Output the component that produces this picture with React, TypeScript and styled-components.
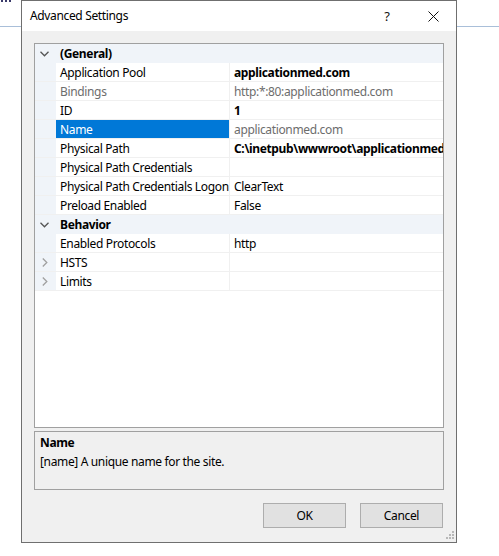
import styled, { createGlobalStyle } from "styled-components";

const GlobalStyle = createGlobalStyle`
  html, body {
    margin: 0;
    padding: 0;
    background: #ffffff;
  }
  body {
    font-family: "Noto Sans", "Open Sans", sans-serif;
    font-size: 12px;
    letter-spacing: -0.35px;
    color: #000;
  }
`;

const Page = styled.div`
  width: 499px;
  height: 556px;
  display: flex;
  align-items: flex-start;
  background-color: #ffffff;
  background-image: linear-gradient(#a9bfd9, #a9bfd9);
  background-size: 100% 1px;
  background-position: 0 26px;
  background-repeat: no-repeat;
  overflow: hidden;
`;

const LeftStrip = styled.div`
  width: 21px;
  flex: none;
  height: 10px;
`;

const Dots = styled.div`
  display: flex;
  gap: 2px;
  padding: 0 0 0 1px;
  span {
    width: 2px;
    height: 2px;
    background: #3a3a6a;
  }
`;

const Dialog = styled.div`
  width: 434px;
  height: 541px;
  flex: none;
  border: 1px solid #6f6f6f;
  background: #f0f0f0;
  display: flex;
  flex-direction: column;
`;

const TitleBar = styled.div`
  height: 30px;
  background: #ffffff;
  display: flex;
  align-items: center;
  padding-left: 8px;
`;

const Title = styled.div`
  flex: 1;
  font-size: 12px;
  color: #000;
  padding-bottom: 1px;
`;

const TitleButton = styled.div<{ $w: number }>`
  width: ${(p) => p.$w}px;
  height: 30px;
  display: flex;
  align-items: center;
  justify-content: center;
  font-size: 13px;
  color: #111;
`;

const Body = styled.div`
  flex: 1;
  display: flex;
  flex-direction: column;
  padding: 12px 12px 0 12px;
`;

const Grid = styled.div`
  height: 383px;
  border: 1px solid #a0a0a0;
  background: #ffffff;
  display: flex;
  flex-direction: column;
  overflow: hidden;
`;

const Row = styled.div<{ $category?: boolean }>`
  height: 18px;
  flex: none;
  display: flex;
  border-bottom: 1px solid ${(p) => (p.$category ? "#f0f4f9" : "#f0f0f0")};
  background: ${(p) => (p.$category ? "#f0f4f9" : "#ffffff")};
`;

const Gutter = styled.div`
  width: 21px;
  flex: none;
  display: flex;
  align-items: center;
  justify-content: center;
  background: #f0f4f9;
  padding: 1px 2px 0 0;
  box-sizing: border-box;
`;

const CategoryText = styled.div`
  font-weight: 700;
  padding: 1px 0 0 4px;
  line-height: 18px;
  white-space: nowrap;
`;

const LabelCell = styled.div<{ $selected?: boolean; $dim?: boolean }>`
  width: 174px;
  flex: none;
  border-right: 1px solid #f0f0f0;
  padding: 1px 0 0 4px;
  box-sizing: border-box;
  line-height: 18px;
  white-space: nowrap;
  overflow: hidden;
  background: ${(p) => (p.$selected ? "#0078d7" : "transparent")};
  color: ${(p) => (p.$selected ? "#ffffff" : p.$dim ? "#6d6d6d" : "#000")};
`;

const ValueCell = styled.div<{ $bold?: boolean; $dim?: boolean }>`
  flex: 1;
  min-width: 0;
  padding: 1px 0 0 4px;
  line-height: 18px;
  white-space: nowrap;
  overflow: hidden;
  font-weight: ${(p) => (p.$bold ? 700 : 400)};
  color: ${(p) => (p.$dim ? "#6d6d6d" : "#000")};
`;

const Description = styled.div`
  margin-top: 3px;
  height: 56px;
  border: 1px solid #a0a0a0;
  background: #f0f0f0;
  padding: 1px 0 0 5px;
  line-height: 19px;
`;

const DescTitle = styled.div`
  font-weight: 700;
`;

const Footer = styled.div`
  display: flex;
  justify-content: flex-end;
  gap: 14px;
  padding: 13px 13px 0 0;
  position: relative;
  flex: 1;
`;

const Button = styled.button`
  width: 83px;
  height: 25px;
  border: 1px solid #adadad;
  background: #e1e1e1;
  font-family: inherit;
  font-size: 12px;
  letter-spacing: inherit;
  color: #000;
  padding: 0;
`;

const Grip = styled.svg`
  position: absolute;
  right: 2px;
  bottom: 3px;
`;

const Chevron = ({ open, color }: { open: boolean; color: string }) =>
  open ? (
    <svg width="9" height="6" viewBox="0 0 9 6">
      <path d="M0.5 0.8 L4.5 4.8 L8.5 0.8" fill="none" stroke={color} strokeWidth="1.3" />
    </svg>
  ) : (
    <svg width="6" height="9" viewBox="0 0 6 9">
      <path d="M0.8 0.5 L4.8 4.5 L0.8 8.5" fill="none" stroke={color} strokeWidth="1.3" />
    </svg>
  );

type Item =
  | { kind: "cat"; name: string }
  | {
      kind: "prop";
      label: string;
      value?: string;
      bold?: boolean;
      dim?: boolean;
      dimLabel?: boolean;
      selected?: boolean;
      collapsed?: boolean;
    };

const items: Item[] = [
  { kind: "cat", name: "(General)" },
  { kind: "prop", label: "Application Pool", value: "applicationmed.com", bold: true },
  { kind: "prop", label: "Bindings", value: "http:*:80:applicationmed.com", dim: true, dimLabel: true },
  { kind: "prop", label: "ID", value: "1", bold: true },
  { kind: "prop", label: "Name", value: "applicationmed.com", dim: true, selected: true },
  { kind: "prop", label: "Physical Path", value: "C:\\inetpub\\wwwroot\\applicationmed.com", bold: true },
  { kind: "prop", label: "Physical Path Credentials", value: "" },
  { kind: "prop", label: "Physical Path Credentials Logon", value: "ClearText" },
  { kind: "prop", label: "Preload Enabled", value: "False" },
  { kind: "cat", name: "Behavior" },
  { kind: "prop", label: "Enabled Protocols", value: "http" },
  { kind: "prop", label: "HSTS", value: "", collapsed: true },
  { kind: "prop", label: "Limits", value: "", collapsed: true },
];

export default function App() {
  return (
    <>
      <GlobalStyle />
      <Page>
        <LeftStrip>
          <Dots>
            <span />
            <span />
            <span />
          </Dots>
        </LeftStrip>
        <Dialog>
          <TitleBar>
            <Title>Advanced Settings</Title>
            <TitleButton $w={46}>?</TitleButton>
            <TitleButton $w={46}>
              <svg width="11" height="11" viewBox="0 0 11 11">
                <path d="M0.5 0.5 L10.5 10.5 M10.5 0.5 L0.5 10.5" stroke="#111" strokeWidth="1" />
              </svg>
            </TitleButton>
          </TitleBar>
          <Body>
            <Grid>
              {items.map((it, i) =>
                it.kind === "cat" ? (
                  <Row key={i} $category>
                    <Gutter>
                      <Chevron open color="#555" />
                    </Gutter>
                    <CategoryText>{it.name}</CategoryText>
                  </Row>
                ) : (
                  <Row key={i}>
                    <Gutter>{it.collapsed && <Chevron open={false} color="#a0a0a0" />}</Gutter>
                    <LabelCell $selected={it.selected} $dim={it.dimLabel}>
                      {it.label}
                    </LabelCell>
                    <ValueCell $bold={it.bold} $dim={it.dim}>
                      {it.value}
                    </ValueCell>
                  </Row>
                )
              )}
            </Grid>
            <Description>
              <DescTitle>Name</DescTitle>
              <div>[name] A unique name for the site.</div>
            </Description>
          </Body>
          <Footer>
            <Button>OK</Button>
            <Button>Cancel</Button>
            <Grip width="8" height="8" viewBox="0 0 8 8">
              <rect x="6" y="0" width="2" height="2" fill="#b8b8b8" />
              <rect x="3" y="3" width="2" height="2" fill="#b8b8b8" />
              <rect x="6" y="3" width="2" height="2" fill="#b8b8b8" />
              <rect x="0" y="6" width="2" height="2" fill="#b8b8b8" />
              <rect x="3" y="6" width="2" height="2" fill="#b8b8b8" />
              <rect x="6" y="6" width="2" height="2" fill="#b8b8b8" />
            </Grip>
          </Footer>
        </Dialog>
      </Page>
    </>
  );
}
